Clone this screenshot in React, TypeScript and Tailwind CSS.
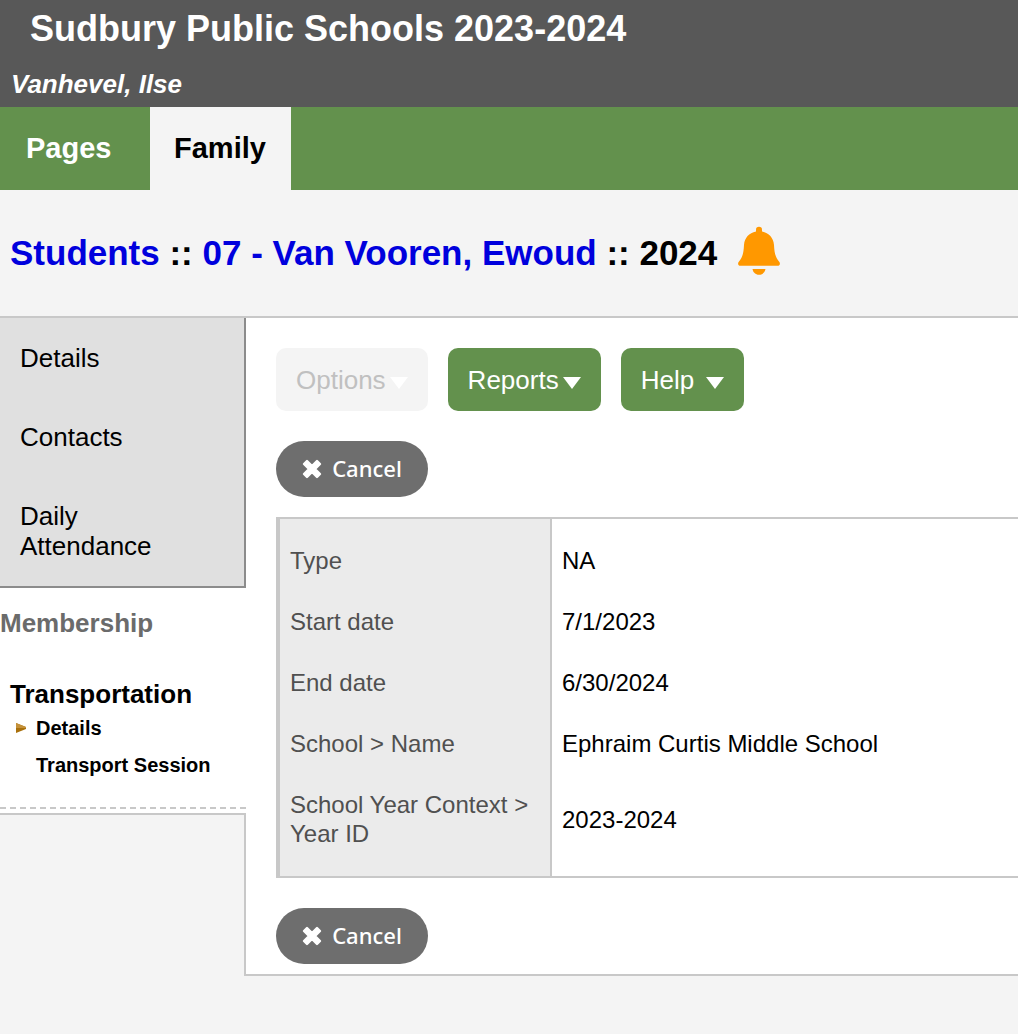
import React from "react";

const rows: { label: string; value: string }[] = [
  { label: "Type", value: "NA" },
  { label: "Start date", value: "7/1/2023" },
  { label: "End date", value: "6/30/2024" },
  { label: "School > Name", value: "Ephraim Curtis Middle School" },
  { label: "School Year Context > Year ID", value: "2023-2024" },
];

function Bell() {
  return (
    <svg viewBox="0 0 44 50" className="mb-1 h-[50px] w-11" fill="#ff9800" aria-hidden="true">
      <path d="M19 4C19 1.4 20 0.8 22 0.8S25 1.4 25 4V5.6C32 7 36.4 12 37 19C37.4 27 38.5 31.5 42 35.5C43.8 37.5 42.8 39.8 40.5 39.8H3.5C1.2 39.8 0.2 37.5 2 35.5C5.5 31.5 6.6 27 7 19C7.6 12 12 7 19 5.6Z" />
      <path d="M15.5 43H28.5C28 46 25.6 48.8 22 48.8S16 46 15.5 43Z" />
    </svg>
  );
}

function MenuButton({ label, disabled = false, wide = false }: { label: string; disabled?: boolean; wide?: boolean }) {
  return (
    <button
      type="button"
      disabled={disabled}
      className={
        "flex h-[63px] items-center rounded-[10px] px-5 pt-0.5 text-[26px] " +
        (wide ? "gap-3 " : "gap-1 ") +
        (disabled ? "bg-[#f4f4f4] text-[#c0c0c0]" : "bg-[#63914d] text-white")
      }
    >
      {label}
      <svg viewBox="0 0 18 12" className="mt-1 h-3 w-[18px]" fill="#ffffff" aria-hidden="true">
        <path d="M0 0H18L9 12Z" />
      </svg>
    </button>
  );
}

function CancelButton() {
  return (
    <button
      type="button"
      className="flex h-14 w-[152px] items-center justify-center gap-[10px] rounded-full bg-[#6e6e6e] pb-0.5 font-['Noto_Sans',sans-serif] text-[22px] font-medium text-white"
    >
      <svg viewBox="0 0 20 20" className="mt-0.5 h-5 w-5" fill="#ffffff" stroke="#ffffff" strokeWidth="2.4" strokeLinejoin="round" aria-hidden="true">
        <path d="M5 2L10 7L15 2L18 5L13 10L18 15L15 18L10 13L5 18L2 15L7 10L2 5Z" />
      </svg>
      Cancel
    </button>
  );
}

export default function App() {
  return (
    <div className="min-h-screen bg-[#f4f4f4] font-['Liberation_Sans',Arial,sans-serif] text-black">
      <header className="bg-[#585858] font-bold text-white">
        <h1 className="px-[30px] pt-[9px] text-[36px] leading-[40px]">Sudbury Public Schools 2023-2024</h1>
        <p className="px-[11px] pt-5 pb-[7px] text-[26px] leading-[31px] italic">Vanhevel, Ilse</p>
      </header>

      <nav className="flex bg-[#63914d] text-[29px] leading-[83px] font-bold" aria-label="Main">
        <a href="#pages" className="w-[150px] pl-[26px] text-white">Pages</a>
        <a href="#family" className="w-[141px] bg-[#f4f4f4] pl-6">Family</a>
      </nav>

      <div className="flex h-[126px] items-center gap-5 px-[10px] text-[35px] font-bold">
        <h2>
          <a href="#students" className="text-[#0000dd]">Students</a> ::{" "}
          <a href="#student" className="text-[#0000dd]">07 - Van Vooren, Ewoud</a> :: 2024
        </h2>
        <Bell />
      </div>

      <div className="flex border-t-2 border-[#c8c8c8]">
        <aside className="flex w-[246px] shrink-0 flex-col">
          <nav aria-label="Student">
            <ul className="flex flex-col gap-[49px] border-r-2 border-b-2 border-[#8c8c8c] bg-[#e0e0e0] py-[25px] pr-16 pl-5 text-[26px] leading-[30px]">
              <li><a href="#details">Details</a></li>
              <li><a href="#contacts">Contacts</a></li>
              <li><a href="#attendance">Daily Attendance</a></li>
            </ul>
          </nav>
          <div className="bg-white pb-1">
            <div className="border-b-2 border-dashed border-[#c8c8c8] pt-5 pb-[27px] font-bold">
              <p className="text-[26px] leading-[30px] text-[#6b6b6b]">Membership</p>
              <h3 className="px-[10px] pt-[41px] text-[26px] leading-[30px]">Transportation</h3>
              <ul className="pt-1 text-[20px] leading-[30px]">
                <li className="flex items-center gap-[10px] pl-4">
                  <svg viewBox="0 0 10 10" className="h-[10px] w-[10px]" aria-hidden="true">
                    <path d="M0 0L10 4V6L0 10Z" fill="#a9700c" />
                    <path d="M0 0L10 4V5H0Z" fill="#c4913a" />
                  </svg>
                  <a href="#transport-details">Details</a>
                </li>
                <li className="pt-[7px] pl-9"><a href="#transport-session">Transport Session</a></li>
              </ul>
            </div>
          </div>
          <div className="grow border-t-2 border-r-2 border-[#c8c8c8]" />
        </aside>

        <main className="-ml-0.5 min-w-0 grow">
          <div className="ml-0.5 bg-white pt-[30px] pb-[10px] pl-[30px]">
            <div className="flex gap-5">
              <MenuButton label="Options" disabled />
              <MenuButton label="Reports" />
              <MenuButton label="Help" wide />
            </div>
            <div className="pt-[30px] pb-5"><CancelButton /></div>
            <table className="w-full table-fixed border-separate border-spacing-0 border-y-2 border-l-4 border-[#c8c8c8] text-left text-[24px] leading-[29px]">
              <colgroup>
                <col className="w-[272px]" />
                <col />
              </colgroup>
              <tbody>
                <tr className="h-[11px]"><td className="border-r-2 border-[#c8c8c8] bg-[#ebebeb]" /><td /></tr>
                {rows.map((r) => (
                  <tr key={r.label}>
                    <th scope="row" className="border-r-2 border-[#c8c8c8] bg-[#ebebeb] py-4 pr-2 pl-[10px] font-normal text-[#505050]">{r.label}</th>
                    <td className="py-4 pl-[10px]">{r.value}</td>
                  </tr>
                ))}
                <tr className="h-3"><td className="border-r-2 border-[#c8c8c8] bg-[#ebebeb]" /><td /></tr>
              </tbody>
            </table>
            <div className="pt-[30px]"><CancelButton /></div>
          </div>
          <div className="h-0.5 bg-[#c8c8c8]" />
        </main>
      </div>
    </div>
  );
}
